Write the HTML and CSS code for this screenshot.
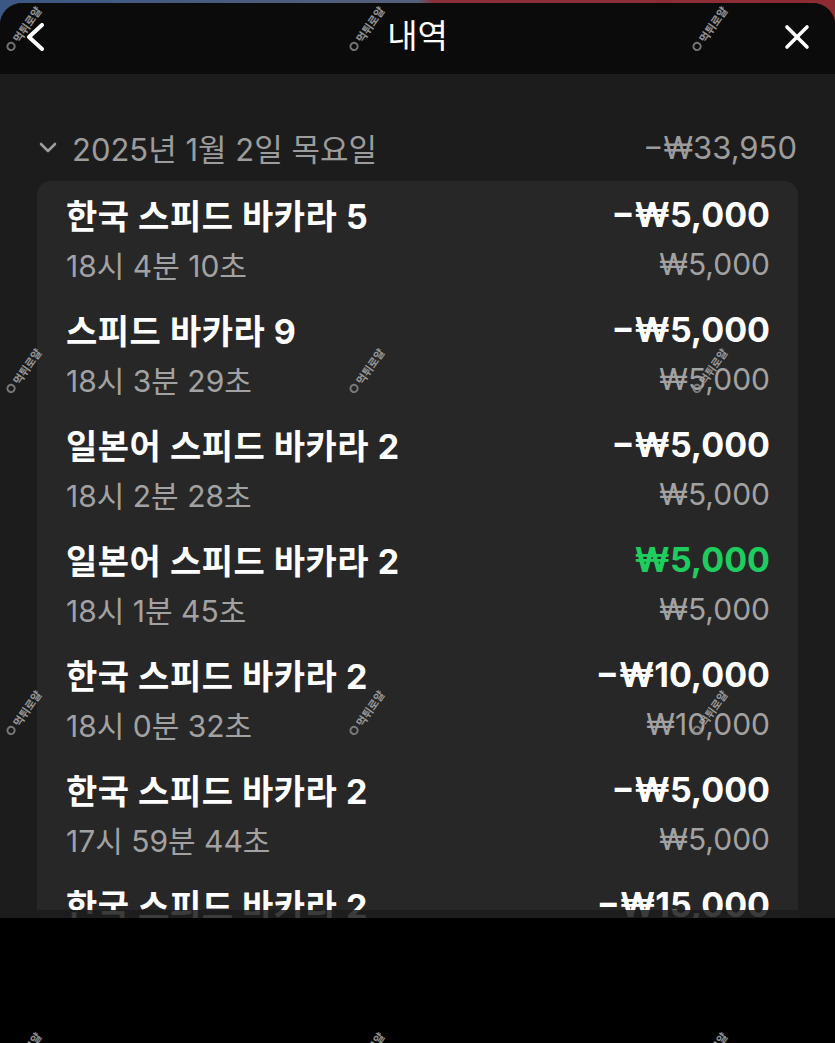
FILE: index.html
```html
<!DOCTYPE html>
<html lang="ko">
<head>
    <meta charset="UTF-8">
    <meta name="viewport" content="width=device-width, initial-scale=1.0">
    <title>내역</title>
    <link rel="stylesheet" href="styles.css">
</head>
<body>
    <div class="screen">
        <div class="frame">
            <div class="sheet">
                <!-- Header -->
                <div class="sheet-header">
                    <div class="header-left">
                        <svg class="icon-back" width="20" height="28" viewBox="0 0 20 28">
                            <polyline points="16,2 3,14 16,26" fill="none" stroke="#fff" stroke-width="4" stroke-linecap="round" stroke-linejoin="round"/>
                        </svg>
                    </div>
                    <div class="sheet-title">내역</div>
                    <div class="header-right">
                        <svg class="icon-close" width="26" height="26" viewBox="0 0 26 26">
                            <line x1="3" y1="3" x2="23" y2="23" stroke="#fff" stroke-width="3.6" stroke-linecap="round"/>
                            <line x1="23" y1="3" x2="3" y2="23" stroke="#fff" stroke-width="3.6" stroke-linecap="round"/>
                        </svg>
                    </div>
                </div>

                <!-- History list -->
                <div class="history">
                    <div class="day-row">
                        <div class="day-label">
                            <svg class="icon-down" width="20" height="13" viewBox="0 0 20 13">
                                <polyline points="3,3 10,10 17,3" fill="none" stroke="#9c9c9c" stroke-width="2.6" stroke-linecap="round" stroke-linejoin="round"/>
                            </svg>
                            <span>2025년 1월 2일 목요일</span>
                        </div>
                        <div class="day-total">−₩33,950</div>
                    </div>

                    <div class="card">
                        <div class="tx">
                            <div class="tx-line">
                                <span class="tx-name">한국 스피드 바카라 5</span>
                                <span class="tx-amount">−₩5,000</span>
                            </div>
                            <div class="tx-line sub">
                                <span>18시 4분 10초</span>
                                <span>₩5,000</span>
                            </div>
                        </div>
                        <div class="tx">
                            <div class="tx-line">
                                <span class="tx-name">스피드 바카라 9</span>
                                <span class="tx-amount">−₩5,000</span>
                            </div>
                            <div class="tx-line sub">
                                <span>18시 3분 29초</span>
                                <span>₩5,000</span>
                            </div>
                        </div>
                        <div class="tx">
                            <div class="tx-line">
                                <span class="tx-name">일본어 스피드 바카라 2</span>
                                <span class="tx-amount">−₩5,000</span>
                            </div>
                            <div class="tx-line sub">
                                <span>18시 2분 28초</span>
                                <span>₩5,000</span>
                            </div>
                        </div>
                        <div class="tx">
                            <div class="tx-line">
                                <span class="tx-name">일본어 스피드 바카라 2</span>
                                <span class="tx-amount win">₩5,000</span>
                            </div>
                            <div class="tx-line sub">
                                <span>18시 1분 45초</span>
                                <span>₩5,000</span>
                            </div>
                        </div>
                        <div class="tx">
                            <div class="tx-line">
                                <span class="tx-name">한국 스피드 바카라 2</span>
                                <span class="tx-amount">−₩10,000</span>
                            </div>
                            <div class="tx-line sub">
                                <span>18시 0분 32초</span>
                                <span>₩10,000</span>
                            </div>
                        </div>
                        <div class="tx">
                            <div class="tx-line">
                                <span class="tx-name">한국 스피드 바카라 2</span>
                                <span class="tx-amount">−₩5,000</span>
                            </div>
                            <div class="tx-line sub">
                                <span>17시 59분 44초</span>
                                <span>₩5,000</span>
                            </div>
                        </div>
                        <div class="tx">
                            <div class="tx-line">
                                <span class="tx-name">한국 스피드 바카라 2</span>
                                <span class="tx-amount">−₩15,000</span>
                            </div>
                            <div class="tx-line sub">
                                <span>17시 58분 51초</span>
                                <span>₩15,000</span>
                            </div>
                        </div>
                    </div>

                    <div class="fade-edge"></div>
                </div>
            </div>
        </div>

        <!-- Watermark layer -->
        <div class="watermarks">
            <div class="wm"><svg width="10" height="10" viewBox="0 0 10 10"><circle cx="5" cy="5" r="3.6" fill="none" stroke="#8f8f8f" stroke-width="2"/></svg><span>먹튀로얄</span></div>
            <div class="wm"><svg width="10" height="10" viewBox="0 0 10 10"><circle cx="5" cy="5" r="3.6" fill="none" stroke="#8f8f8f" stroke-width="2"/></svg><span>먹튀로얄</span></div>
            <div class="wm"><svg width="10" height="10" viewBox="0 0 10 10"><circle cx="5" cy="5" r="3.6" fill="none" stroke="#8f8f8f" stroke-width="2"/></svg><span>먹튀로얄</span></div>
            <div class="wm"><svg width="10" height="10" viewBox="0 0 10 10"><circle cx="5" cy="5" r="3.6" fill="none" stroke="#8f8f8f" stroke-width="2"/></svg><span>먹튀로얄</span></div>
            <div class="wm"><svg width="10" height="10" viewBox="0 0 10 10"><circle cx="5" cy="5" r="3.6" fill="none" stroke="#8f8f8f" stroke-width="2"/></svg><span>먹튀로얄</span></div>
            <div class="wm"><svg width="10" height="10" viewBox="0 0 10 10"><circle cx="5" cy="5" r="3.6" fill="none" stroke="#8f8f8f" stroke-width="2"/></svg><span>먹튀로얄</span></div>
            <div class="wm"><svg width="10" height="10" viewBox="0 0 10 10"><circle cx="5" cy="5" r="3.6" fill="none" stroke="#8f8f8f" stroke-width="2"/></svg><span>먹튀로얄</span></div>
            <div class="wm"><svg width="10" height="10" viewBox="0 0 10 10"><circle cx="5" cy="5" r="3.6" fill="none" stroke="#8f8f8f" stroke-width="2"/></svg><span>먹튀로얄</span></div>
            <div class="wm"><svg width="10" height="10" viewBox="0 0 10 10"><circle cx="5" cy="5" r="3.6" fill="none" stroke="#8f8f8f" stroke-width="2"/></svg><span>먹튀로얄</span></div>
            <div class="wm"><svg width="10" height="10" viewBox="0 0 10 10"><circle cx="5" cy="5" r="3.6" fill="none" stroke="#8f8f8f" stroke-width="2"/></svg><span>먹튀로얄</span></div>
            <div class="wm"><svg width="10" height="10" viewBox="0 0 10 10"><circle cx="5" cy="5" r="3.6" fill="none" stroke="#8f8f8f" stroke-width="2"/></svg><span>먹튀로얄</span></div>
            <div class="wm"><svg width="10" height="10" viewBox="0 0 10 10"><circle cx="5" cy="5" r="3.6" fill="none" stroke="#8f8f8f" stroke-width="2"/></svg><span>먹튀로얄</span></div>
        </div>
    </div>
</body>
</html>
```

FILE: styles.css
```css
* {
    box-sizing: border-box;
}

body {
    margin: 0;
    background: #000;
    font-family: Inter, "Noto Sans CJK KR", sans-serif;
    color: #fff;
}

.screen {
    position: relative;
    width: 835px;
    height: 1043px;
    overflow: hidden;
    background: #000;
}

/* coloured app behind the sheet, only visible at the top edge */
.frame {
    height: 918px;
    padding-top: 3px;
    background: linear-gradient(to right, #3b5784 0%, #55607a 50%, #8a2f38 52%, #8d2b33 100%);
}

.sheet {
    height: 100%;
    display: flex;
    flex-direction: column;
    border-radius: 22px 22px 0 0;
    overflow: hidden;
    background: #1c1c1c;
}

.sheet-header {
    height: 71px;
    flex: none;
    display: grid;
    grid-template-columns: 1fr auto 1fr;
    align-items: center;
    background: #0b0b0b;
    padding-bottom: 4px;
}

.header-left {
    padding-left: 26px;
    display: flex;
}

.header-right {
    padding-right: 25px;
    display: flex;
    justify-content: flex-end;
}

.sheet-title {
    font-size: 33px;
    font-weight: 400;
    line-height: 1;
}

.history {
    position: relative;
    flex: 1;
    overflow: hidden;
    padding: 50px 37px 0;
}

.day-row {
    height: 46px;
    display: flex;
    align-items: center;
    justify-content: space-between;
    padding: 0 1px 0 1px;
    margin-bottom: 11px;
    color: #9c9c9c;
    font-size: 31px;
}

.day-label {
    display: flex;
    align-items: center;
    gap: 14px;
}

.icon-down {
    margin-top: 1px;
}

.card {
    background: #272727;
    border-radius: 14px;
    padding: 9px 28px 0 29px;
}

.tx {
    padding-bottom: 17px;
}

.tx-line {
    height: 48px;
    display: flex;
    align-items: center;
    justify-content: space-between;
    font-size: 34px;
    font-weight: 700;
}

.tx-name {
    letter-spacing: 0.5px;
}

.tx-line.sub {
    margin-top: 2px;
    font-weight: 400;
    font-size: 30px;
    letter-spacing: 0;
    color: #a2a2a2;
}

.tx-amount.win {
    color: #1fcd5e;
}

.fade-edge {
    position: absolute;
    left: 0;
    right: 0;
    bottom: 0;
    height: 8px;
    background: rgba(28, 28, 28, 0.86);
}

/* watermark overlay */
.watermarks {
    position: absolute;
    inset: 0;
    display: grid;
    grid-template-columns: repeat(3, 343px);
    grid-auto-rows: 342px;
    align-items: start;
    justify-items: start;
    padding-top: 22px;
    pointer-events: none;
}

.wm {
    display: flex;
    align-items: center;
    gap: 2px;
    margin-left: -3px;
    white-space: nowrap;
    transform: rotate(-55deg);
    font-family: "Noto Sans CJK KR", sans-serif;
    font-size: 11px;
    line-height: 14px;
    font-weight: 700;
    color: #b4b4b4;
    opacity: 0.8;
    text-shadow: 0 0 1px #222;
}
```
